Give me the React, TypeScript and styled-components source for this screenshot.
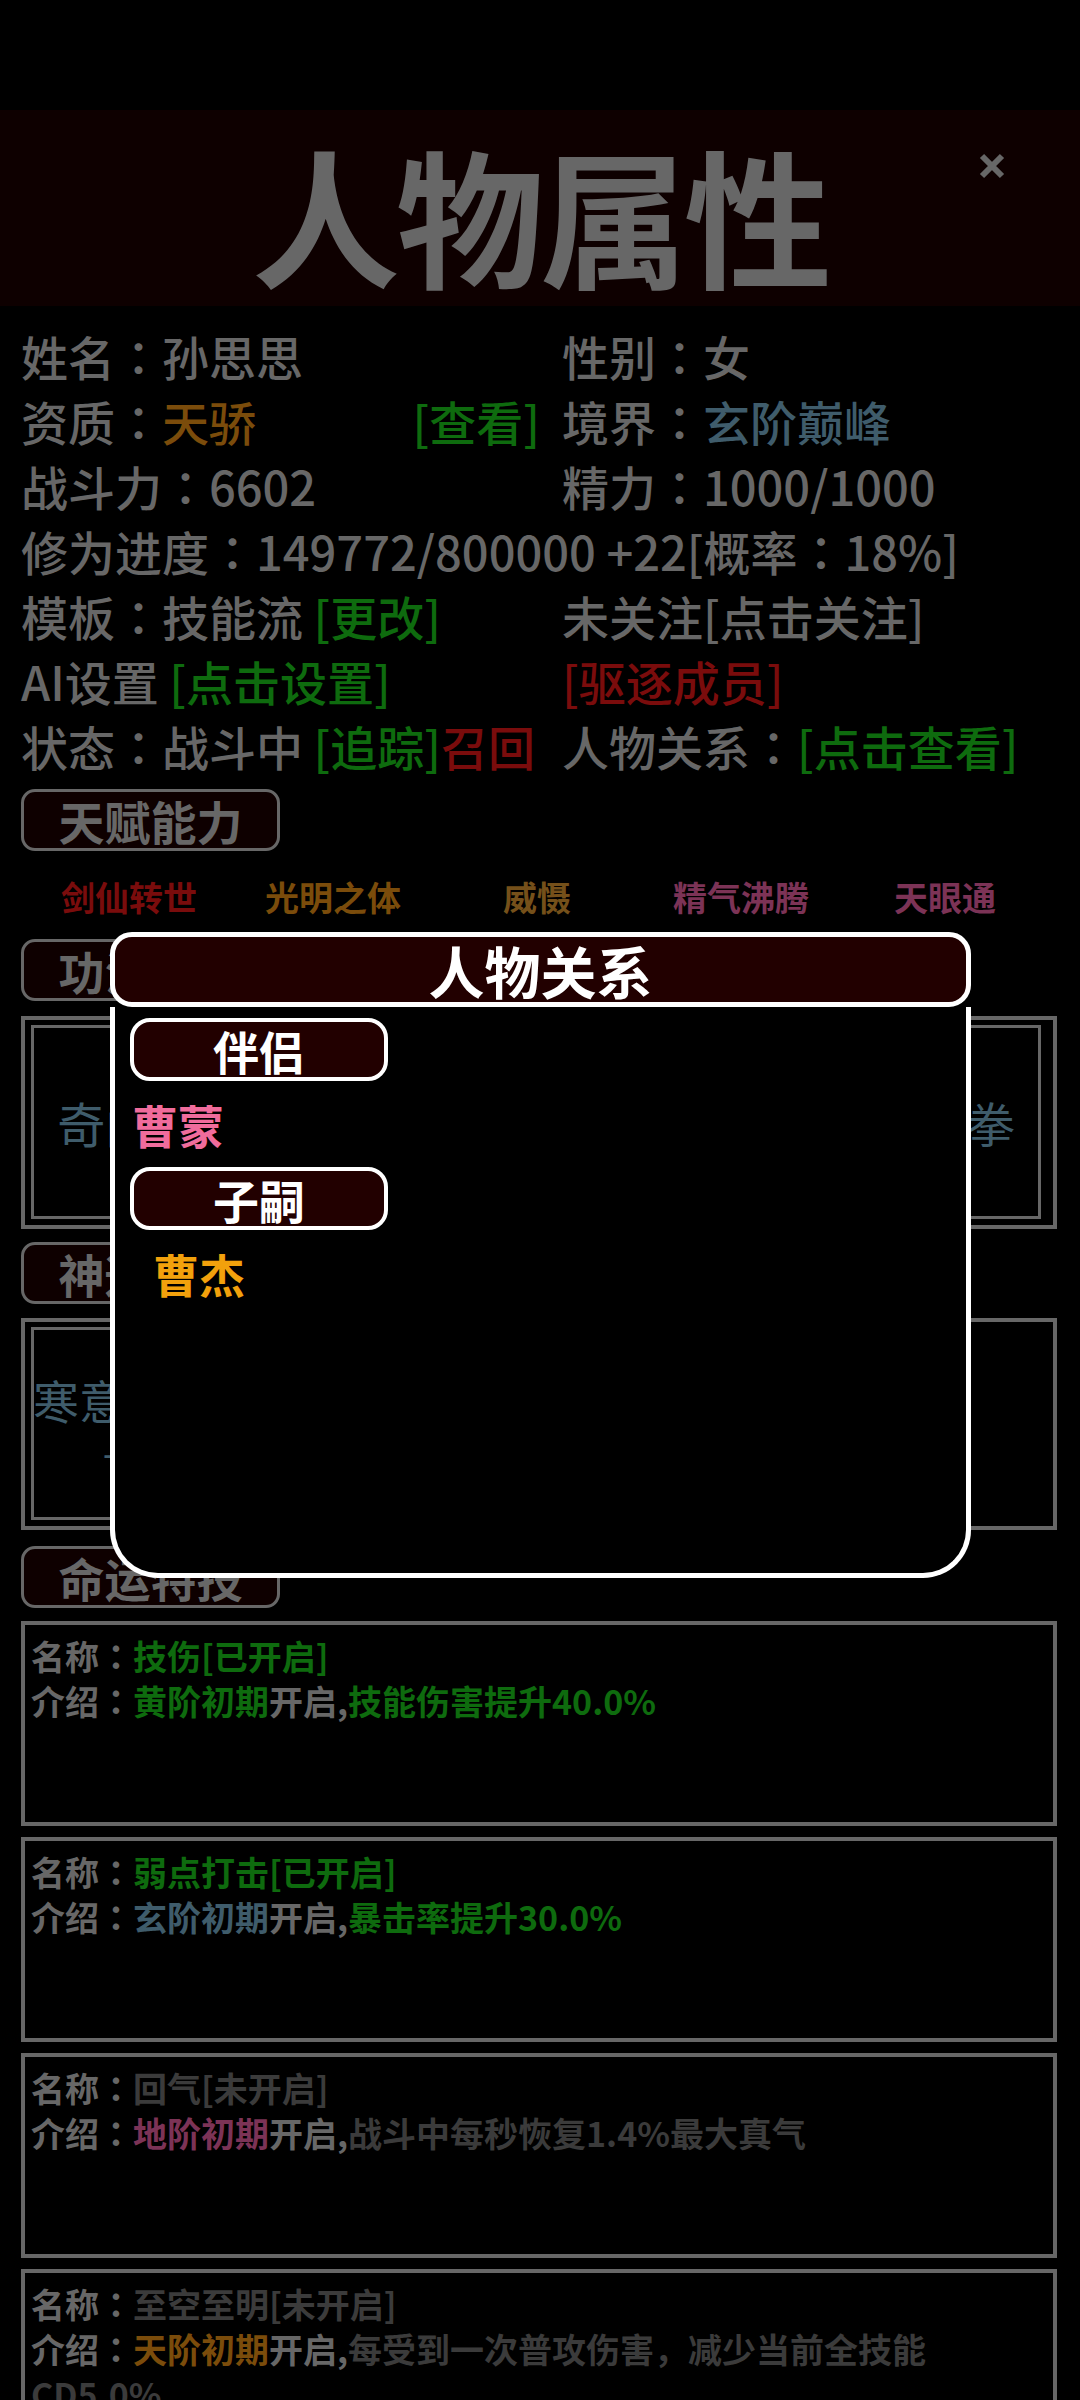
import React from 'react';
import styled, { createGlobalStyle } from 'styled-components';

const C = {
  gray: '#676767',
  dim: '#3b3b3b',
  green: '#0e6b0e',
  brown: '#7b4c0b',
  blue: '#3f5c6b',
  red: '#7a0c0c',
  mauve: '#7c3356',
  pink: '#f06c9c',
  gold: '#f2a10c',
  band: '#0e0000',
  maroon: '#220000',
};

const GlobalStyle = createGlobalStyle`
  html, body { margin: 0; padding: 0; background: #000; }
  body { font-family: "Noto Sans CJK SC", "Noto Sans", sans-serif; }
  * { box-sizing: border-box; }
`;

const Page = styled.div`
  position: relative;
  width: 1080px;
  height: 2400px;
  overflow: hidden;
  background: #000;
`;

const StatusBar = styled.div`
  height: 110px;
`;

const TitleBand = styled.header`
  position: relative;
  height: 196px;
  background: ${C.band};
  display: flex;
  align-items: center;
  justify-content: center;
`;

const Title = styled.h1`
  margin: 0;
  padding-top: 10px;
  font-size: 148px;
  line-height: 1;
  font-weight: 700;
  letter-spacing: -4px;
  color: ${C.gray};
`;

const CloseButton = styled.div`
  position: absolute;
  top: 42px;
  right: 74px;
  width: 28px;
  height: 28px;
`;

const Content = styled.main`
  display: flex;
  flex-direction: column;
  padding: 17px 23px 0 21px;
`;

const InfoGrid = styled.div`
  display: grid;
  grid-template-columns: 519px 1fr;
  column-gap: 22px;
  font-size: 47px;
  line-height: 65px;
  font-weight: 500;
  color: ${C.gray};
`;

const InfoCell = styled.div<{ $full?: boolean; $split?: boolean }>`
  white-space: nowrap;
  grid-column: ${(p) => (p.$full ? '1 / -1' : 'auto')};
  display: ${(p) => (p.$split ? 'flex' : 'block')};
  justify-content: space-between;
`;

const Colon = styled.span`
  font-family: "Noto Sans CJK TC", "Noto Sans CJK SC", sans-serif;
`;

const Tint = styled.span<{ $c: string }>`
  color: ${(p) => p.$c};
`;

const SectionLabel = styled.div<{ $top: number }>`
  margin-top: ${(p) => p.$top}px;
  width: 259px;
  height: 62px;
  border: 3px solid ${C.gray};
  border-radius: 14px;
  background: ${C.band};
  display: flex;
  align-items: center;
  justify-content: center;
  font-size: 46px;
  font-weight: 700;
  color: ${C.gray};
`;

const TalentRow = styled.div`
  margin: 24px 0 0 6px;
  display: grid;
  grid-template-columns: repeat(5, 204px);
  font-size: 34px;
  line-height: 44px;
  font-weight: 700;
`;

const Talent = styled.span<{ $c: string }>`
  text-align: center;
  color: ${(p) => p.$c};
`;

const Frame = styled.div<{ $top: number; $h: number }>`
  margin-top: ${(p) => p.$top}px;
  height: ${(p) => p.$h}px;
  border: 4px solid ${C.gray};
  padding: 5px 12px 6px 6px;
  display: flex;
`;

const SkillStrip = styled.div`
  flex: 1;
  border: 3px solid ${C.gray};
  display: grid;
  grid-template-columns: repeat(3, 1fr);
  align-items: center;
`;

const SkillName = styled.span`
  text-align: center;
  font-size: 48px;
  color: ${C.blue};
  white-space: nowrap;
`;

const PowerCard = styled.div`
  width: 280px;
  border: 3px solid ${C.gray};
  display: flex;
  flex-direction: column;
  align-items: center;
  padding-top: 38px;
  white-space: nowrap;
`;

const PowerName = styled.span`
  font-size: 46px;
  line-height: 62px;
  color: ${C.blue};
`;

const PowerSub = styled.span`
  font-size: 34px;
  line-height: 52px;
  color: ${C.blue};
`;

const CardList = styled.div`
  margin-top: 13px;
  display: flex;
  flex-direction: column;
  gap: 11px;
`;

const FateCard = styled.div`
  height: 205px;
  flex-shrink: 0;
  border: 4px solid ${C.gray};
  padding: 8px 20px 0 6px;
  font-size: 34px;
  line-height: 45px;
  font-weight: 700;
  color: ${C.gray};
`;

const Modal = styled.section`
  position: absolute;
  left: 110px;
  top: 932px;
  width: 861px;
  height: 646px;
  display: flex;
  flex-direction: column;
`;

const ModalHeader = styled.div`
  height: 75px;
  border: 5px solid #fff;
  border-radius: 22px;
  background: ${C.maroon};
  display: flex;
  align-items: center;
  justify-content: center;
  font-size: 56px;
  font-weight: 700;
  color: #fff;
`;

const ModalBody = styled.div`
  flex: 1;
  border: 5px solid #fff;
  border-top: none;
  border-radius: 0 0 48px 48px;
  background: #000;
  padding: 11px 15px;
  display: flex;
  flex-direction: column;
  align-items: flex-start;
`;

const Tag = styled.div`
  width: 258px;
  height: 63px;
  border: 4px solid #fff;
  border-radius: 20px;
  background: ${C.maroon};
  display: flex;
  align-items: center;
  justify-content: center;
  font-size: 46px;
  font-weight: 700;
  color: #fff;
`;

const Person = styled.div<{ $c: string; $indent: number }>`
  padding-left: ${(p) => p.$indent}px;
  font-size: 46px;
  line-height: 86px;
  font-weight: 700;
  color: ${(p) => p.$c};
`;

const talents = [
  { t: '剑仙转世', c: C.red },
  { t: '光明之体', c: C.brown },
  { t: '威慑', c: '#75501a' },
  { t: '精气沸腾', c: C.mauve },
  { t: '天眼通', c: C.mauve },
];

type Seg = { t: string; c: string };
const fates: { name: Seg; desc: Seg[] }[] = [
  {
    name: { t: '技伤[已开启]', c: C.green },
    desc: [
      { t: '黄阶初期', c: C.green },
      { t: '开启,', c: C.gray },
      { t: '技能伤害提升40.0%', c: C.green },
    ],
  },
  {
    name: { t: '弱点打击[已开启]', c: C.green },
    desc: [
      { t: '玄阶初期', c: C.blue },
      { t: '开启,', c: C.gray },
      { t: '暴击率提升30.0%', c: C.green },
    ],
  },
  {
    name: { t: '回气[未开启]', c: C.dim },
    desc: [
      { t: '地阶初期', c: C.mauve },
      { t: '开启,', c: C.gray },
      { t: '战斗中每秒恢复1.4%最大真气', c: C.dim },
    ],
  },
  {
    name: { t: '至空至明[未开启]', c: C.dim },
    desc: [
      { t: '天阶初期', c: C.brown },
      { t: '开启,', c: C.gray },
      { t: '每受到一次普攻伤害，减少当前全技能CD5.0%', c: C.dim },
    ],
  },
];

const K = () => <Colon>：</Colon>;

export default function App() {
  return (
    <Page>
      <GlobalStyle />
      <StatusBar />
      <TitleBand>
        <Title>人物属性</Title>
        <CloseButton>
          <svg width="28" height="28" viewBox="0 0 28 28">
            <path d="M4 4 L24 24 M24 4 L4 24" stroke={C.gray} strokeWidth="6" strokeLinecap="butt" />
          </svg>
        </CloseButton>
      </TitleBand>

      <Content>
        <InfoGrid>
          <InfoCell>
            姓名<K />孙思思
          </InfoCell>
          <InfoCell>
            性别<K />女
          </InfoCell>
          <InfoCell $split>
            <span>
              资质<K />
              <Tint $c={C.brown}>天骄</Tint>
            </span>
            <Tint $c={C.green}>[查看]</Tint>
          </InfoCell>
          <InfoCell>
            境界<K />
            <Tint $c={C.blue}>玄阶巅峰</Tint>
          </InfoCell>
          <InfoCell>
            战斗力<K />6602
          </InfoCell>
          <InfoCell>
            精力<K />1000/1000
          </InfoCell>
          <InfoCell $full>
            修为进度<K />149772/800000 +22[概率<K />18%]
          </InfoCell>
          <InfoCell>
            模板<K />技能流 <Tint $c={C.green}>[更改]</Tint>
          </InfoCell>
          <InfoCell>未关注[点击关注]</InfoCell>
          <InfoCell>
            AI设置 <Tint $c={C.green}>[点击设置]</Tint>
          </InfoCell>
          <InfoCell>
            <Tint $c={C.red}>[驱逐成员]</Tint>
          </InfoCell>
          <InfoCell>
            状态<K />战斗中 <Tint $c={C.green}>[追踪]</Tint>
            <Tint $c={C.red}>召回</Tint>
          </InfoCell>
          <InfoCell>
            人物关系<K />
            <Tint $c={C.green}>[点击查看]</Tint>
          </InfoCell>
        </InfoGrid>

        <SectionLabel $top={11}>天赋能力</SectionLabel>
        <TalentRow>
          {talents.map((t) => (
            <Talent key={t.t} $c={t.c}>
              {t.t}
            </Talent>
          ))}
        </TalentRow>

        <SectionLabel $top={20}>功法秘籍</SectionLabel>
        <Frame $top={15} $h={213}>
          <SkillStrip>
            <SkillName>奇门遁甲神功</SkillName>
            <SkillName>九阳真经心法</SkillName>
            <SkillName>混元霹雳神拳</SkillName>
          </SkillStrip>
        </Frame>

        <SectionLabel $top={13}>神通技能</SectionLabel>
        <Frame $top={14} $h={212}>
          <PowerCard>
            <PowerName>寒意凝霜神通</PowerName>
            <PowerSub>一品神通</PowerSub>
          </PowerCard>
        </Frame>

        <SectionLabel $top={16}>命运特技</SectionLabel>
        <CardList>
          {fates.map((f) => (
            <FateCard key={f.name.t}>
              <div>
                名称<K />
                <Tint $c={f.name.c}>{f.name.t}</Tint>
              </div>
              <div>
                介绍<K />
                {f.desc.map((s, i) => (
                  <Tint key={i} $c={s.c}>
                    {s.t}
                  </Tint>
                ))}
              </div>
            </FateCard>
          ))}
        </CardList>
      </Content>

      <Modal>
        <ModalHeader>人物关系</ModalHeader>
        <ModalBody>
          <Tag>伴侣</Tag>
          <Person $c={C.pink} $indent={2}>
            曹蒙
          </Person>
          <Tag>子嗣</Tag>
          <Person $c={C.gold} $indent={23}>
            曹杰
          </Person>
        </ModalBody>
      </Modal>
    </Page>
  );
}
